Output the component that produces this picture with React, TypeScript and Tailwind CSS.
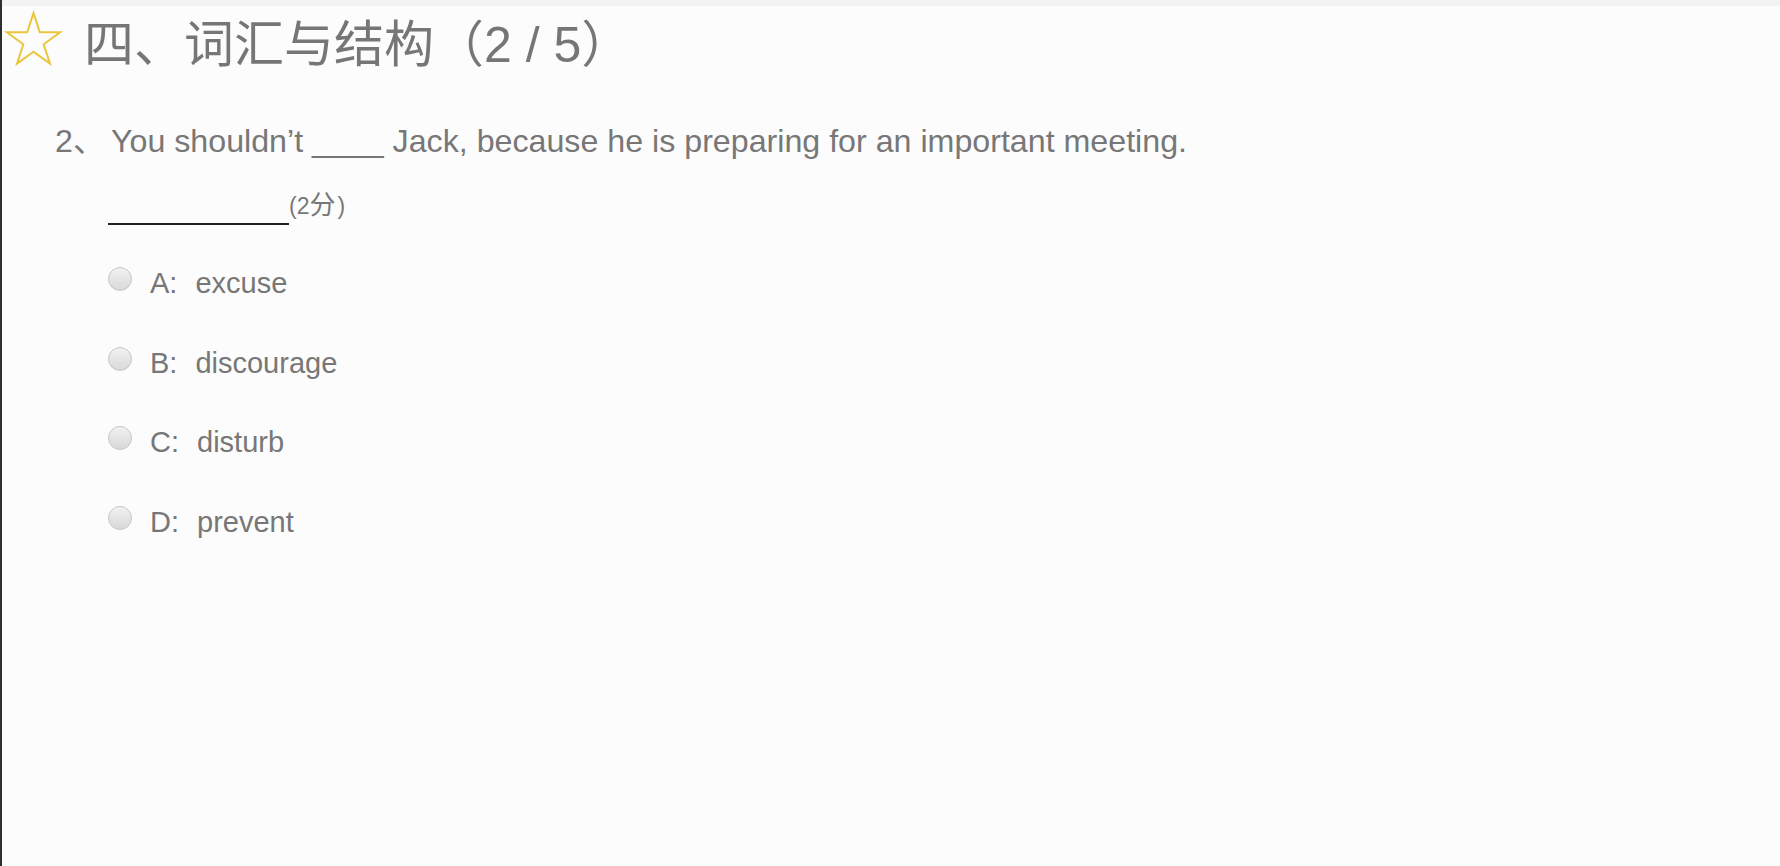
import React from "react";

const FONT = "font-['Liberation_Sans','Noto_Sans_CJK_SC',sans-serif]";

function Star() {
  return (
    <svg width="64" height="64" viewBox="2 6 64 64" className="shrink-0">
      <polygon
        points="33.5,13 39.79,32.34 60.13,32.35 43.68,44.31 49.96,63.65 33.5,51.7 17.04,63.65 23.32,44.31 6.87,32.35 27.21,32.34"
        fill="none"
        stroke="#e9c63c"
        strokeWidth="2"
        strokeLinejoin="miter"
      />
    </svg>
  );
}

function Radio() {
  return (
    <span className="mt-[4px] block h-[24px] w-[24px] shrink-0 rounded-full border border-[#c6c6c6] bg-linear-to-b from-[#f2f2f2] to-[#d8d8d8]" />
  );
}

const options = [
  { k: "A", v: "excuse" },
  { k: "B", v: "discourage" },
  { k: "C", v: "disturb" },
  { k: "D", v: "prevent" },
];

export default function App() {
  return (
    <div className={`min-h-[866px] w-full border-l-2 border-[#2e2e2e] bg-[#fcfcfc] ${FONT}`}>
      <div className="h-[6px] bg-[#f2f2f2]" />
      <div className="flex h-[70px] items-start">
        <Star />
        <h1 className="ml-[18px] mt-[14px] text-[50px] leading-none font-normal text-[#767676] whitespace-nowrap">
          四、词汇与结构（2 / 5）
        </h1>
      </div>
      <div className="mt-[45px] flex pl-[53px] text-[32.2px] leading-[40px] text-[#777]">
        <span className="w-[56px] shrink-0">2、</span>
        <span className="whitespace-nowrap">You shouldn’t ____ Jack, because he is preparing for an important meeting.</span>
      </div>
      <div className="mt-[33px] flex items-end pl-[106px]">
        <span className="block h-[2px] w-[181px] bg-[#222]" />
        <span className="mb-[8px] text-[23px] leading-[22px] text-[#777] whitespace-nowrap">
          (2<span className="text-[26px]">分</span><span className="ml-[2px]">)</span>
        </span>
      </div>
      <div className="mt-[38px] flex flex-col gap-[39.5px] pl-[106px]">
        {options.map((o) => (
          <div key={o.k} className="flex items-start">
            <Radio />
            <span className="ml-[18px] text-[29px] leading-[40px] text-[#777] whitespace-nowrap">
              {o.k}:
              <span className="ml-[18px]">{o.v}</span>
            </span>
          </div>
        ))}
      </div>
    </div>
  );
}
